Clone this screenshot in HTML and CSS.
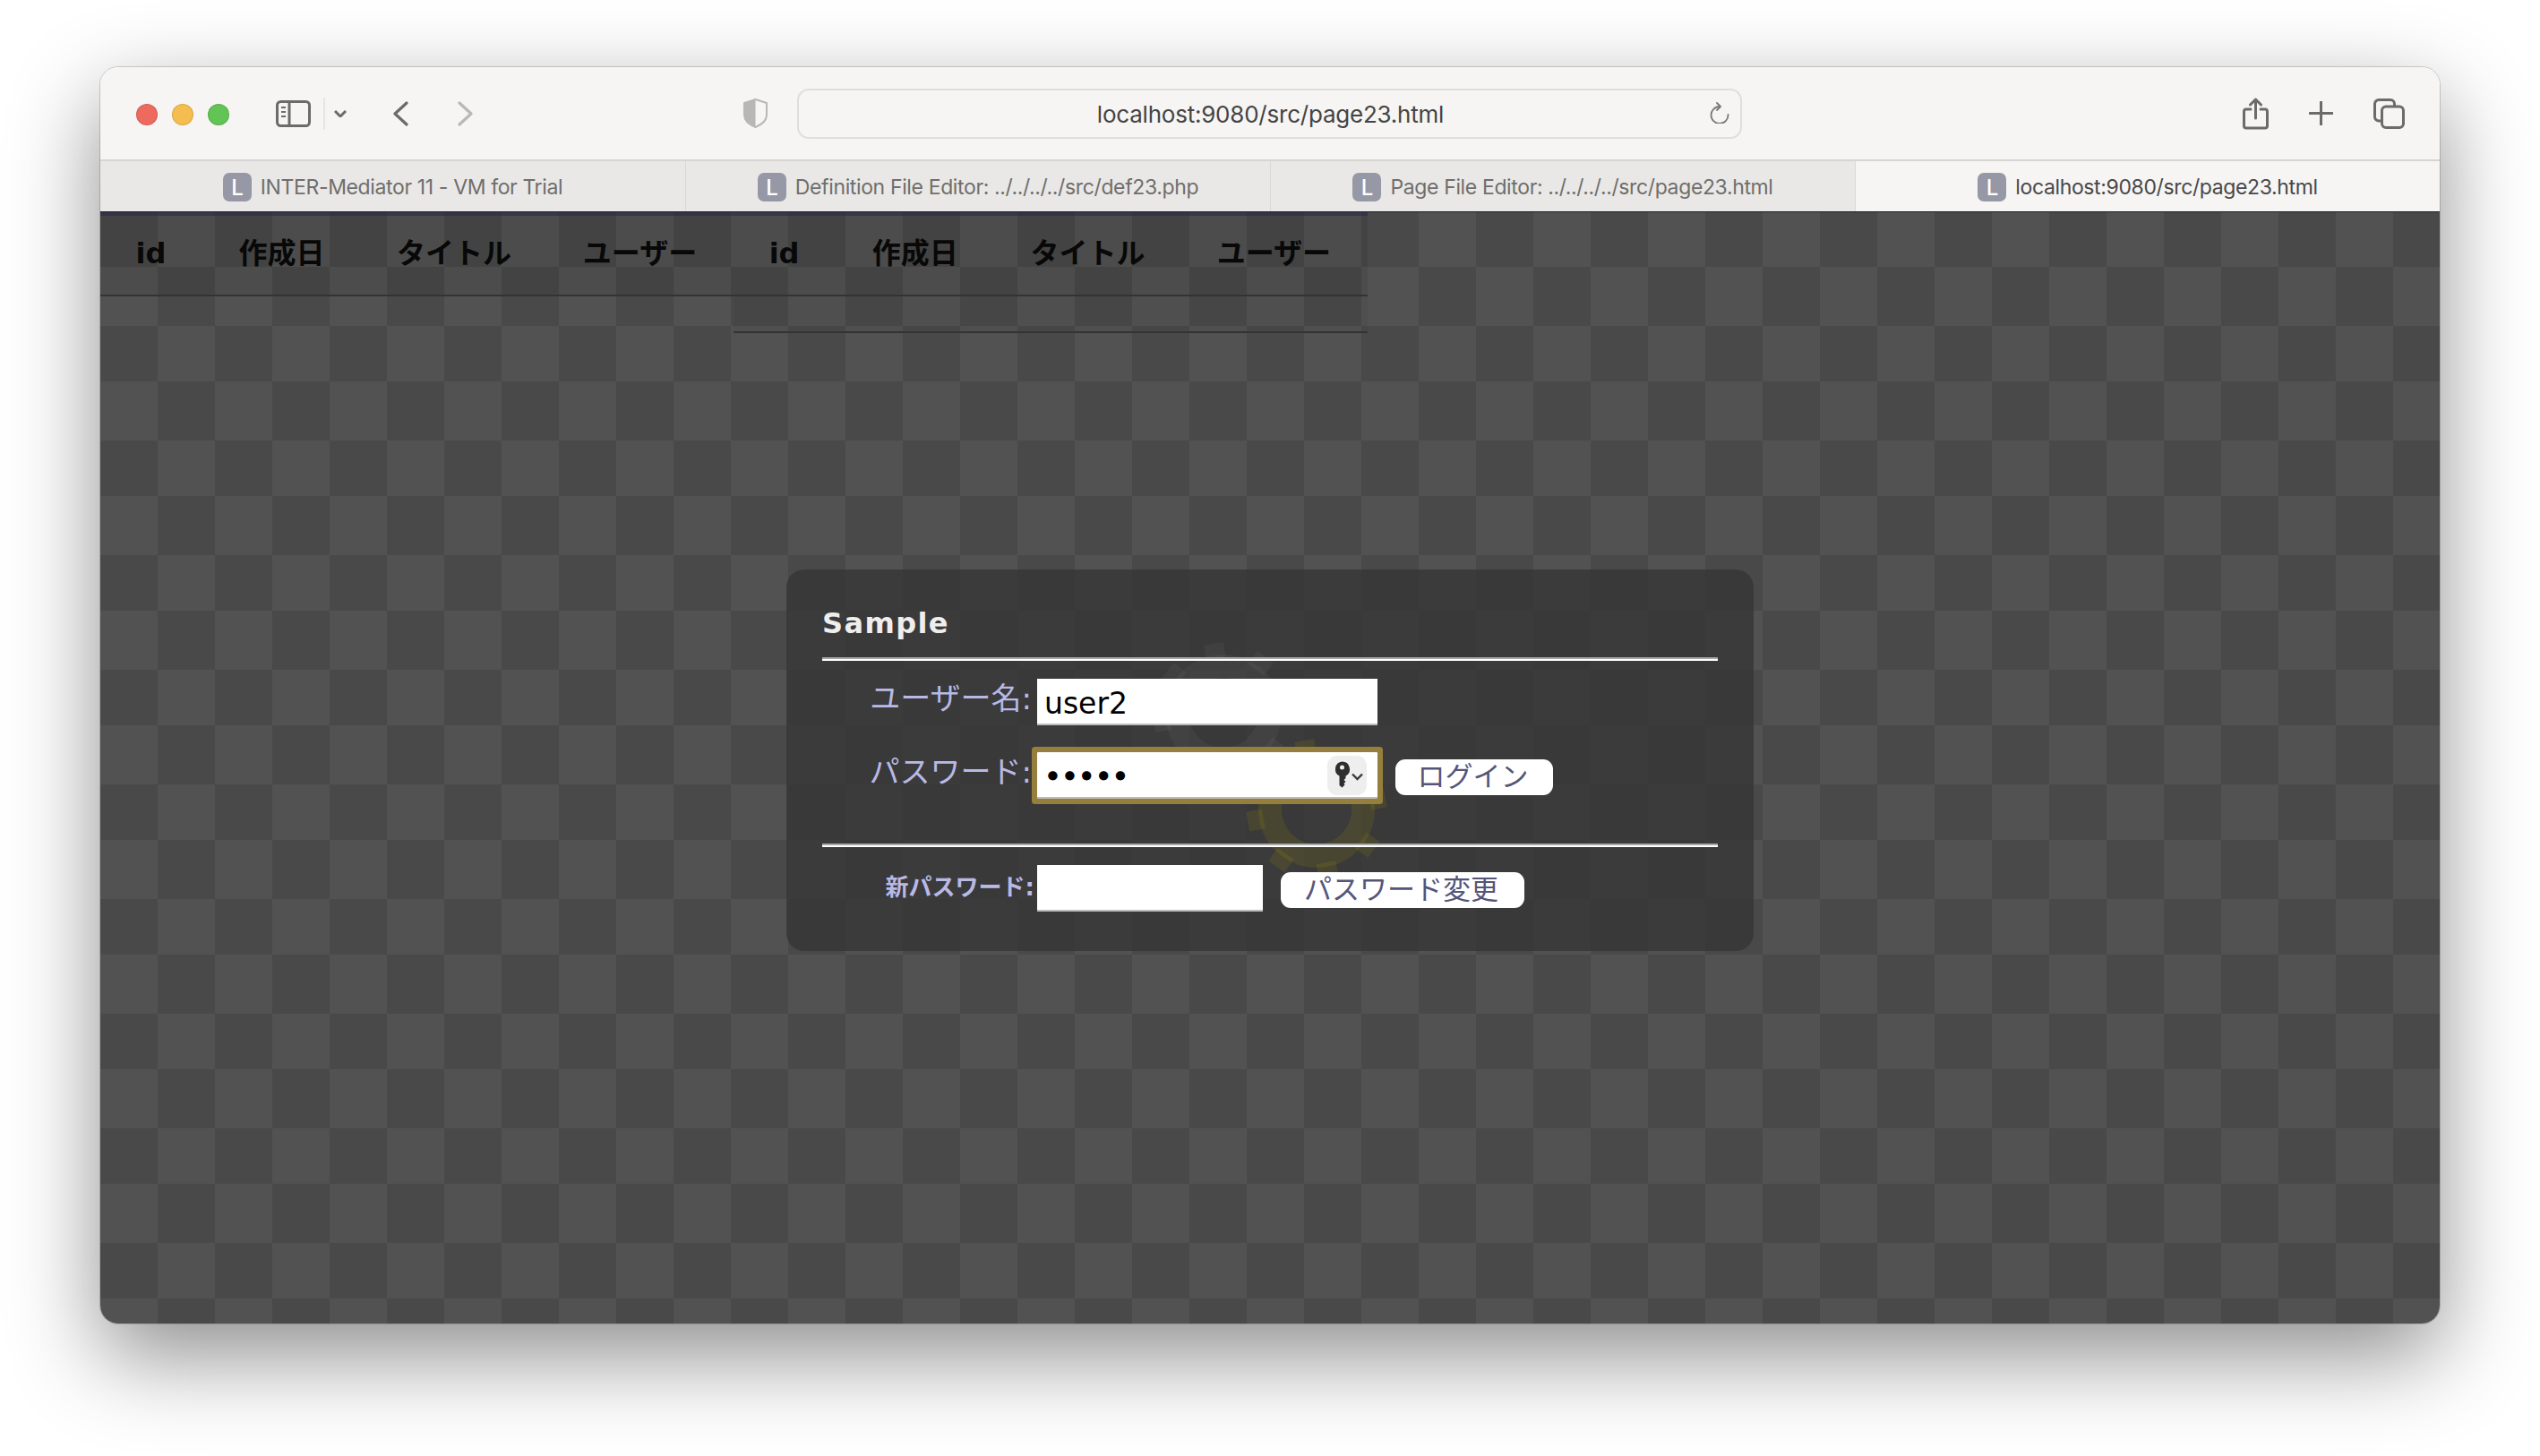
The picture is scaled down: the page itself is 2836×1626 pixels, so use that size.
FILE: index.html
```html
<!DOCTYPE html>
<html lang="ja">
<head>
<meta charset="utf-8">
<title>localhost:9080/src/page23.html</title>
<link rel="stylesheet" href="styles.css">
</head>
<body>
<div class="window">
  <header class="toolbar">
    <div class="lights"><span class="light red"></span><span class="light yellow"></span><span class="light green"></span></div>
    <svg class="ic-sidebar" width="39" height="30" viewBox="0 0 39 30" fill="none" stroke="#6c6b69" stroke-width="3"><rect x="1.5" y="1.5" width="36" height="27" rx="4"/><path d="M15 2v26"/><path d="M6 8h5M6 13h5M6 18h5" stroke-width="2"/></svg>
    <span class="tool-divider"></span>
    <svg class="ic-chevron" width="14" height="8" viewBox="0 0 14 8" fill="none" stroke="#6c6b69" stroke-width="3"><path d="M1 1l6 6 6-6"/></svg>
    <svg class="ic-back" width="18" height="28" viewBox="0 0 18 28" fill="none" stroke="#6c6b69" stroke-width="3.2" stroke-linecap="round" stroke-linejoin="round"><path d="M16 2L3 14l13 12"/></svg>
    <svg class="ic-forward" width="18" height="28" viewBox="0 0 18 28" fill="none" stroke="#b9b8b6" stroke-width="3.2" stroke-linecap="round" stroke-linejoin="round"><path d="M2 2l13 12L2 26"/></svg>
    <svg class="ic-shield" width="27" height="33" viewBox="0 0 27 33"><path d="M13.5 1L26 5v13c0 6-5 11-12.500 14C6 29 1 24 1 18V5z" fill="#f6f5f3" stroke="#b8b7b4" stroke-width="2"/><path d="M13.500 1L1 5v13c0 6 5 11 12.500 14z" fill="#b8b7b4"/></svg>
    <div class="urlbar">
      <span class="url">localhost:9080/src/page23.html</span>
      <svg class="ic-reload" width="23" height="24" viewBox="0 0 23 24" fill="none" stroke="#7a7977" stroke-width="1.800" stroke-linecap="round" stroke-linejoin="round"><path d="M20.500 14a9.500 9.500 0 1 1-9.500-9"/><path d="M8 1l4 4-4 4"/></svg>
    </div>
    <svg class="ic-share" width="29" height="36" viewBox="0 0 29 36" fill="none" stroke="#6c6b69" stroke-width="3" stroke-linecap="round" stroke-linejoin="round"><path d="M9 13H4a2.500 2.500 0 0 0-2.500 2.500v16A2.500 2.500 0 0 0 4 34h21a2.500 2.500 0 0 0 2.500-2.500v-16A2.500 2.500 0 0 0 25 13h-5"/><path d="M14.500 23V2M8.500 8l6-6 6 6"/></svg>
    <svg class="ic-plus" width="27" height="27" viewBox="0 0 27 27" fill="none" stroke="#6c6b69" stroke-width="3" stroke-linecap="round"><path d="M13.500 1v25M1 13.500h25"/></svg>
    <svg class="ic-tabs" width="35" height="34" viewBox="0 0 35 34" fill="none" stroke="#6c6b69" stroke-width="3"><path d="M8 25H6a4.500 4.500 0 0 1-4.500-4.500V6A4.500 4.500 0 0 1 6 1.500h13A4.500 4.500 0 0 1 23.500 6v2"/><rect x="9.500" y="9" width="24" height="23.500" rx="4.500"/></svg>
  </header>
  <nav class="tabbar">
    <div class="tab"><span class="favicon">L</span><span>INTER-Mediator 11 - VM for Trial</span></div>
    <div class="tab"><span class="favicon">L</span><span>Definition File Editor: ../../../../src/def23.php</span></div>
    <div class="tab"><span class="favicon">L</span><span>Page File Editor: ../../../../src/page23.html</span></div>
    <div class="tab active"><span class="favicon">L</span><span>localhost:9080/src/page23.html</span></div>
  </nav>
  <main class="page">
    <div class="tables">
      <table class="grid">
        <thead><tr><th class="c-id">id</th><th class="c-date">作成日</th><th class="c-title">タイトル</th><th class="c-user">ユーザー</th></tr></thead>
      </table>
      <table class="grid">
        <thead><tr><th class="c-id">id</th><th class="c-date">作成日</th><th class="c-title">タイトル</th><th class="c-user">ユーザー</th></tr></thead>
        <tbody><tr class="empty"><td colspan="4"></td></tr></tbody>
      </table>
    </div>
    <div class="overlay">
      <section class="panel">
        <svg class="gears" viewBox="0 0 1080 426" width="1080" height="426">
          <defs>
            <g id="gear">
              <circle r="52" fill="none" stroke-width="26" stroke="currentColor"/>
              <g fill="currentColor">
                <rect x="-11" y="-78" width="22" height="18"/>
                <rect x="-11" y="-78" width="22" height="18" transform="rotate(45)"/>
                <rect x="-11" y="-78" width="22" height="18" transform="rotate(90)"/>
                <rect x="-11" y="-78" width="22" height="18" transform="rotate(135)"/>
                <rect x="-11" y="-78" width="22" height="18" transform="rotate(180)"/>
                <rect x="-11" y="-78" width="22" height="18" transform="rotate(225)"/>
                <rect x="-11" y="-78" width="22" height="18" transform="rotate(270)"/>
                <rect x="-11" y="-78" width="22" height="18" transform="rotate(315)"/>
              </g>
            </g>
          </defs>
          <use href="#gear" class="gear-grey" transform="translate(488 160) rotate(-8)"/>
          <use href="#gear" class="gear-gold" transform="translate(592 268) rotate(-10)"/>
        </svg>
        <h1 class="panel-title">Sample</h1>
        <hr class="rule">
        <div class="field field-user">
          <label class="field-label" for="user">ユーザー名:</label>
          <input class="text-input wide" id="user" type="text" value="user2">
        </div>
        <div class="field field-pass">
          <label class="field-label" for="pass">パスワード:</label>
          <div class="pass-wrap">
            <input class="text-input wide focused" id="pass" type="password" value="abcde">
            <span class="key-btn">
              <svg width="44" height="44" viewBox="0 0 44 44"><path fill-rule="evenodd" fill="#2e2e2e" d="M16.500 6.500a8.500 8.500 0 0 1 4 16V25l-2 2 2 2-2 2 1 1.500-3 3-3-2.500V22.500a8.500 8.500 0 0 1 3-16zm0 4a2.500 2.500 0 1 0 0 5 2.500 2.500 0 0 0 0-5z"/><path d="M28 20.500l5.500 5.500 5.500-5.500" fill="none" stroke="#3a3a3a" stroke-width="2.400"/></svg>
            </span>
          </div>
          <button class="btn btn-login" type="button">ログイン</button>
        </div>
        <hr class="rule rule-lower">
        <div class="field field-new">
          <label class="field-label small" for="newpass">新パスワード:</label>
          <input class="text-input narrow" id="newpass" type="password">
          <button class="btn btn-change" type="button">パスワード変更</button>
        </div>
      </section>
    </div>
  </main>
</div>
</body>
</html>
```

FILE: styles.css
```css
* { box-sizing: border-box; }
html, body { margin: 0; padding: 0; background: #fff; }
body { height: 1626px; overflow: hidden; font-family: "DejaVu Sans", "Noto Sans CJK JP", sans-serif; }

.window {
  margin: 75px 112px 0;
  height: 1403px;
  display: flex;
  flex-direction: column;
  border-radius: 20px;
  box-shadow: 0 36px 100px rgba(0,0,0,.45), 0 0 0 1px rgba(0,0,0,.16);
  overflow: visible;
}

.toolbar {
  height: 105px;
  flex: none;
  display: flex;
  align-items: center;
  padding: 0 39px 0 40px;
  background: #f6f5f3;
  border-radius: 20px 20px 0 0;
  border-bottom: 2px solid #d6d5d3;
}
.lights { display: flex; gap: 16px; position: relative; top: 1px; }
.light { width: 24px; height: 24px; border-radius: 50%; border: 1px solid rgba(0,0,0,.12); }
.red { background: #ee6a5f; }
.yellow { background: #f5bd4f; }
.green { background: #61c454; }
.ic-sidebar { margin-left: 52px; }
.tool-divider { margin-left: 14px; width: 2px; height: 36px; background: #e6e5e3; }
.ic-chevron { margin-left: 10px; }
.ic-back { margin-left: 51px; }
.ic-forward { margin-left: 55px; }
.ic-shield { margin-left: 301px; }
.urlbar {
  margin-left: 33px;
  width: 1055px;
  height: 56px;
  position: relative;
  display: flex;
  align-items: center;
  justify-content: center;
  padding: 2px 0 0 2px;
  border: 2px solid #dfdedc;
  border-radius: 13px;
  background: #f6f5f3;
}
.url { font-family: Inter, sans-serif; font-size: 26px; color: #444; letter-spacing: -.22px; }
.ic-reload { position: absolute; right: 11px; top: 13px; }
.ic-share { margin-left: auto; }
.ic-plus { margin-left: 45px; }
.ic-tabs { margin-left: 45px; }

.tabbar {
  height: 56px;
  flex: none;
  display: grid;
  grid-template-columns: repeat(4, 1fr);
  background: #e9e8e6;
}
.tab {
  display: flex;
  align-items: center;
  justify-content: center;
  gap: 10px;
  padding-top: 2px;
  font-family: Inter, sans-serif;
  font-size: 23px;
  letter-spacing: -.37px;
  color: #6f6e6c;
  border-left: 1px solid #d9d8d6;
}
.tab:first-child { border-left: 0; }
.tab.active { background: #f6f5f3; color: #48484a; }
.favicon {
  width: 32px;
  height: 32px;
  border-radius: 7px;
  background: #9798a6;
  color: #fff;
  display: flex;
  align-items: center;
  justify-content: center;
  font-size: 24px;
  font-weight: 500;
}

.page {
  flex: 1;
  position: relative;
  border-radius: 0 0 20px 20px;
  overflow: hidden;
  background-color: #494949;
  background-image: conic-gradient(at 64px 62px, #525252 0 90deg, #494949 90deg 180deg, #525252 180deg 270deg, #494949 270deg 360deg);
  background-size: 128px 128px;
  box-shadow: inset 0 1px 0 #1f1f24;
}

.tables {
  width: 1415px;
  display: flex;
  align-items: flex-start;
  border-top: 5px solid rgba(32,32,72,.55);
}
.grid { width: 707px; border-collapse: collapse; table-layout: fixed; flex: none; }
.grid + .grid { width: 708px; }
.grid th {
  height: 89px;
  padding: 20px 0 0 3px;
  vertical-align: top;
  text-align: center;
  font-size: 32px;
  font-weight: 700;
  line-height: 44px;
  color: #080808;
  background: rgba(0,0,0,.07);
  border-bottom: 2px solid #333;
}
.c-id { width: 110px; }
.c-date { width: 182px; }
.c-title { width: 203px; }
.c-user { width: 212px; }
.empty td { height: 41px; padding: 0; background: rgba(0,0,0,.03); border-bottom: 2px solid #333; }

.overlay {
  position: absolute;
  inset: 0;
  display: flex;
  align-items: center;
  justify-content: center;
  padding-bottom: 16px;
}
.panel {
  position: relative;
  width: 1080px;
  height: 426px;
  padding: 0 40px;
  border-radius: 20px;
  background: rgba(54,54,54,.8);
}
.gears { position: absolute; left: 0; top: 0; }
.gear-grey { color: rgba(255,255,255,.04); }
.gear-gold { color: rgba(180,160,0,.13); }
.panel-title {
  position: relative;
  margin: 0;
  padding-top: 38px;
  height: 98px;
  font-size: 32px;
  letter-spacing: 1.4px;
  line-height: 44px;
  font-weight: 700;
  color: #eee;
}
.rule {
  position: relative;
  margin: 0;
  height: 4px;
  border: 0;
  border-top: 2px solid #a8a8a8;
  border-bottom: 2px solid #fff;
}
.rule-lower { margin-top: 50px; }
.field { position: relative; display: flex; align-items: flex-start; }
.field-user { margin-top: 20px; }
.field-pass { margin-top: 30px; }
.field-new { margin-top: 20px; }
.field-label {
  width: 240px;
  height: 52px;
  padding-right: 6px;
  font-size: 34px;
  line-height: 44px;
  text-align: right;
  white-space: nowrap;
  color: #b9b9e6;
}
.field-label.small { padding-right: 3px; font-size: 26px; font-weight: 700; line-height: 50px; }
.text-input {
  display: block;
  height: 52px;
  padding: 4px 8px 0;
  border: 0;
  border-bottom: 2px solid #bdbdbd;
  border-radius: 0;
  outline: 0;
  background: #fff;
  color: #000;
  font-family: "DejaVu Sans", sans-serif;
  font-size: 33px;
}
.wide { width: 380px; }
.narrow { width: 252px; }
.focused { box-shadow: 0 0 0 6px #967e3c; border-radius: 1px; font-size: 32px; -webkit-text-stroke: 1px #000; }
.pass-wrap { position: relative; }
.key-btn {
  position: absolute;
  right: 12px;
  top: 4px;
  width: 44px;
  height: 44px;
  border-radius: 11px;
  background: #eee;
}
.key-btn svg { display: block; }
.btn {
  height: 40px;
  padding: 0 3px 2px 0;
  margin-top: 8px;
  border: 0;
  border-radius: 11px;
  background: #fff;
  color: #55557a;
  font-family: "DejaVu Sans", "Noto Sans CJK JP", sans-serif;
  font-size: 31px;
  line-height: 36px;
  white-space: nowrap;
}
.btn-login { margin-left: 20px; width: 176px; }
.btn-change { margin-left: 20px; width: 272px; }
```
